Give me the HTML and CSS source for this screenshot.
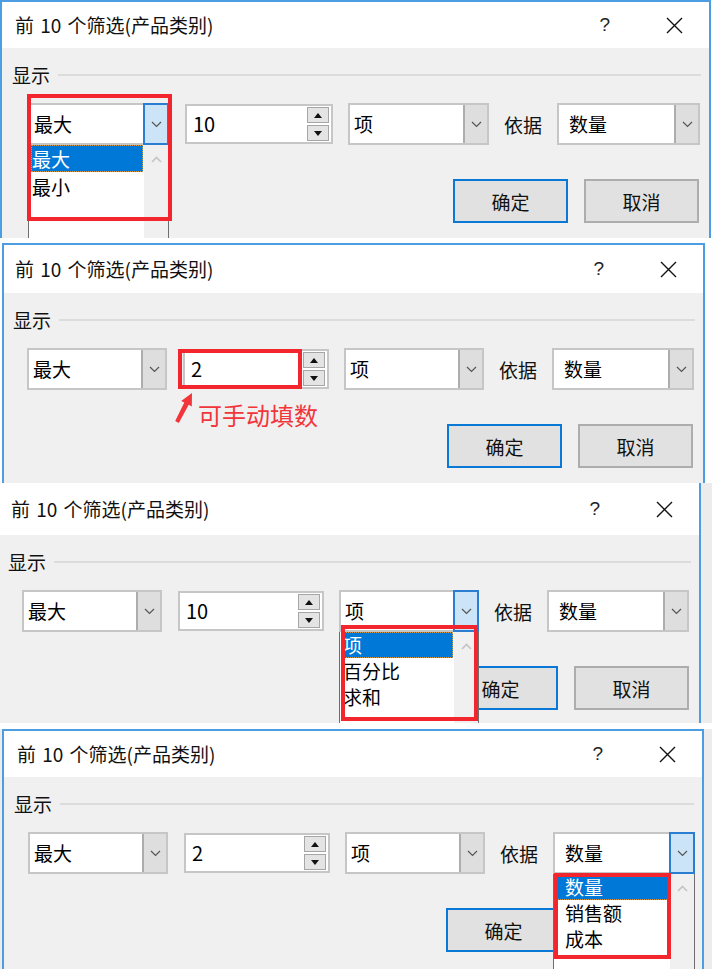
FILE: index.html
```html
<!DOCTYPE html>
<html lang="zh-CN">
<head>
<meta charset="utf-8">
<title>前 10 个筛选</title>
<link rel="stylesheet" href="styles.css">
</head>
<body>

<!-- Shot 1: first combo open -->
<div class="shot s1">
  <div class="dialog d1">
    <div class="titlebar">
      <span class="title">前 10 个筛选(产品类别)</span>
      <span class="help">?</span>
      <span class="close"><svg width="17" height="17" viewBox="0 0 17 17"><path d="M1 1L16 16M16 1L1 16" stroke="#111" stroke-width="1.4" fill="none"/></svg></span>
    </div>
    <div class="body">
      <div class="legend"><span>显示</span><i class="rule"></i></div>
      <div class="controls">
        <div class="combo c1">
          <span class="val">最大</span>
          <span class="btn active"><svg width="11" height="7" viewBox="0 0 11 7"><path d="M1 1l4.5 4.5L10 1" fill="none" stroke="#555" stroke-width="1.2"/></svg></span>
          <div class="list">
            <div class="items"><div class="item sel">最大</div><div class="item">最小</div></div>
            <div class="sb"><svg width="11" height="7" viewBox="0 0 11 7"><path d="M1 6l4.5-4.5L10 6" fill="none" stroke="#c4c4c4" stroke-width="1.6"/></svg></div>
          </div>
          <div class="mark m1"></div>
        </div>
        <div class="spin">
          <span class="val">10</span>
          <span class="arrows">
            <span class="arr"><svg width="8" height="5" viewBox="0 0 8 5"><path d="M0 5L4 0L8 5Z" fill="#111"/></svg></span>
            <span class="arr"><svg width="8" height="5" viewBox="0 0 8 5"><path d="M0 0L4 5L8 0Z" fill="#111"/></svg></span>
          </span>
        </div>
        <div class="combo c2">
          <span class="val">项</span>
          <span class="btn"><svg width="11" height="7" viewBox="0 0 11 7"><path d="M1 1l4.5 4.5L10 1" fill="none" stroke="#555" stroke-width="1.2"/></svg></span>
        </div>
        <span class="label">依据</span>
        <div class="combo c3">
          <span class="val">数量</span>
          <span class="btn"><svg width="11" height="7" viewBox="0 0 11 7"><path d="M1 1l4.5 4.5L10 1" fill="none" stroke="#555" stroke-width="1.2"/></svg></span>
        </div>
      </div>
      <div class="buttons"><span class="button default">确定</span><span class="button">取消</span></div>
    </div>
  </div>
</div>

<!-- Shot 2: number typed manually -->
<div class="shot s2">
  <div class="dialog d2">
    <div class="titlebar">
      <span class="title">前 10 个筛选(产品类别)</span>
      <span class="help">?</span>
      <span class="close"><svg width="17" height="17" viewBox="0 0 17 17"><path d="M1 1L16 16M16 1L1 16" stroke="#111" stroke-width="1.4" fill="none"/></svg></span>
    </div>
    <div class="body">
      <div class="legend"><span>显示</span><i class="rule"></i></div>
      <div class="controls">
        <div class="combo c1">
          <span class="val">最大</span>
          <span class="btn"><svg width="11" height="7" viewBox="0 0 11 7"><path d="M1 1l4.5 4.5L10 1" fill="none" stroke="#555" stroke-width="1.2"/></svg></span>
        </div>
        <div class="spin">
          <span class="val">2</span>
          <span class="arrows">
            <span class="arr"><svg width="8" height="5" viewBox="0 0 8 5"><path d="M0 5L4 0L8 5Z" fill="#111"/></svg></span>
            <span class="arr"><svg width="8" height="5" viewBox="0 0 8 5"><path d="M0 0L4 5L8 0Z" fill="#111"/></svg></span>
          </span>
          <div class="mark m2"></div>
        </div>
        <div class="combo c2">
          <span class="val">项</span>
          <span class="btn"><svg width="11" height="7" viewBox="0 0 11 7"><path d="M1 1l4.5 4.5L10 1" fill="none" stroke="#555" stroke-width="1.2"/></svg></span>
        </div>
        <span class="label">依据</span>
        <div class="combo c3">
          <span class="val">数量</span>
          <span class="btn"><svg width="11" height="7" viewBox="0 0 11 7"><path d="M1 1l4.5 4.5L10 1" fill="none" stroke="#555" stroke-width="1.2"/></svg></span>
        </div>
      </div>
      <div class="buttons"><span class="button default">确定</span><span class="button">取消</span></div>
    </div>
    <svg class="note-arrow" width="24" height="34" viewBox="0 0 24 34"><path d="M19 2L18.8 15.5L15.7 13.85L5.8 31.9L2.2 30.1L11.3 11.55L8.2 9.9Z" fill="#f2353a"/></svg>
    <span class="note">可手动填数</span>
  </div>
</div>

<!-- Shot 3: second combo open -->
<div class="shot s3">
  <div class="dialog d3">
    <div class="titlebar">
      <span class="title">前 10 个筛选(产品类别)</span>
      <span class="help">?</span>
      <span class="close"><svg width="17" height="17" viewBox="0 0 17 17"><path d="M1 1L16 16M16 1L1 16" stroke="#111" stroke-width="1.4" fill="none"/></svg></span>
    </div>
    <div class="body">
      <div class="legend"><span>显示</span><i class="rule"></i></div>
      <div class="controls">
        <div class="combo c1">
          <span class="val">最大</span>
          <span class="btn"><svg width="11" height="7" viewBox="0 0 11 7"><path d="M1 1l4.5 4.5L10 1" fill="none" stroke="#555" stroke-width="1.2"/></svg></span>
        </div>
        <div class="spin">
          <span class="val">10</span>
          <span class="arrows">
            <span class="arr"><svg width="8" height="5" viewBox="0 0 8 5"><path d="M0 5L4 0L8 5Z" fill="#111"/></svg></span>
            <span class="arr"><svg width="8" height="5" viewBox="0 0 8 5"><path d="M0 0L4 5L8 0Z" fill="#111"/></svg></span>
          </span>
        </div>
        <div class="combo c2">
          <span class="val">项</span>
          <span class="btn active"><svg width="11" height="7" viewBox="0 0 11 7"><path d="M1 1l4.5 4.5L10 1" fill="none" stroke="#555" stroke-width="1.2"/></svg></span>
          <div class="list">
            <div class="items"><div class="item sel">项</div><div class="item">百分比</div><div class="item">求和</div></div>
            <div class="sb"><svg width="11" height="7" viewBox="0 0 11 7"><path d="M1 6l4.5-4.5L10 6" fill="none" stroke="#c4c4c4" stroke-width="1.6"/></svg></div>
          </div>
          <div class="mark m3"></div>
        </div>
        <span class="label">依据</span>
        <div class="combo c3">
          <span class="val">数量</span>
          <span class="btn"><svg width="11" height="7" viewBox="0 0 11 7"><path d="M1 1l4.5 4.5L10 1" fill="none" stroke="#555" stroke-width="1.2"/></svg></span>
        </div>
      </div>
      <div class="buttons"><span class="button default">确定</span><span class="button">取消</span></div>
    </div>
  </div>
</div>

<!-- Shot 4: third combo open -->
<div class="shot s4">
  <div class="dialog d4">
    <div class="titlebar">
      <span class="title">前 10 个筛选(产品类别)</span>
      <span class="help">?</span>
      <span class="close"><svg width="17" height="17" viewBox="0 0 17 17"><path d="M1 1L16 16M16 1L1 16" stroke="#111" stroke-width="1.4" fill="none"/></svg></span>
    </div>
    <div class="body">
      <div class="legend"><span>显示</span><i class="rule"></i></div>
      <div class="controls">
        <div class="combo c1">
          <span class="val">最大</span>
          <span class="btn"><svg width="11" height="7" viewBox="0 0 11 7"><path d="M1 1l4.5 4.5L10 1" fill="none" stroke="#555" stroke-width="1.2"/></svg></span>
        </div>
        <div class="spin">
          <span class="val">2</span>
          <span class="arrows">
            <span class="arr"><svg width="8" height="5" viewBox="0 0 8 5"><path d="M0 5L4 0L8 5Z" fill="#111"/></svg></span>
            <span class="arr"><svg width="8" height="5" viewBox="0 0 8 5"><path d="M0 0L4 5L8 0Z" fill="#111"/></svg></span>
          </span>
        </div>
        <div class="combo c2">
          <span class="val">项</span>
          <span class="btn"><svg width="11" height="7" viewBox="0 0 11 7"><path d="M1 1l4.5 4.5L10 1" fill="none" stroke="#555" stroke-width="1.2"/></svg></span>
        </div>
        <span class="label">依据</span>
        <div class="combo c3">
          <span class="val">数量</span>
          <span class="btn active"><svg width="11" height="7" viewBox="0 0 11 7"><path d="M1 1l4.5 4.5L10 1" fill="none" stroke="#555" stroke-width="1.2"/></svg></span>
          <div class="list">
            <div class="items"><div class="item sel">数量</div><div class="item">销售额</div><div class="item">成本</div></div>
            <div class="sb"><svg width="11" height="7" viewBox="0 0 11 7"><path d="M1 6l4.5-4.5L10 6" fill="none" stroke="#c4c4c4" stroke-width="1.6"/></svg></div>
          </div>
          <div class="mark m4"></div>
        </div>
      </div>
      <div class="buttons"><span class="button default">确定</span><span class="button">取消</span></div>
    </div>
  </div>
</div>

</body>
</html>
```

FILE: styles.css
```css
* { box-sizing: border-box; margin: 0; padding: 0; }

html, body {
  width: 712px;
  height: 969px;
  overflow: hidden;
}

body {
  background: #ffffff;
  font-family: "Noto Sans CJK SC", "Microsoft YaHei", sans-serif;
  font-size: 19px;
  color: #000;
}

.shot { width: 712px; display: flex; }
.s1 { height: 238px; margin-bottom: 5px; }
.s2 { height: 240px; }
.s3 { height: 240px; margin-bottom: 6px; background: #ececec; }
.s4 { height: 240px; background: #ececec; }

.dialog {
  position: relative;
  margin-left: var(--x);
  width: var(--w);
  height: 100%;
  background: #f0f0f0;
  border: 2px solid #4d9de2;
  border-bottom: 0;
  overflow: hidden;
}

.d1 { --x: 0px; --w: 711px; --tx: 13px; --th: 46px; --lx: 10px; --cx: 16px;
      --w1: 141px; --w2: 148px; --w3: 141px; --w4: 143px; }
.d2 { --x: 2px; --w: 703px; --tx: 11px; --th: 48px; --lx: 9px; --cx: 14px;
      --w1: 140px; --w2: 146px; --w3: 140px; --w4: 142px; }
.d3 { --x: 0px; --w: 701px; --tx: 11px; --th: 52px; --lx: 8px; --cx: 14px;
      --w1: 140px; --w2: 146px; --w3: 140px; --w4: 142px;
      border-top: 0; border-left: 0; }
.d4 { --x: 2px; --w: 702px; --tx: 13px; --th: 46px; --lx: 10px; --cx: 14px;
      --w1: 140px; --w2: 146px; --w3: 140px; --w4: 142px; }

/* title bar */
.titlebar {
  height: var(--th);
  background: #fff;
  display: flex;
  align-items: center;
  padding-left: var(--tx);
  line-height: 24px;
}
.title { white-space: nowrap; color: #111; word-spacing: 2px; }
.help {
  margin-left: auto;
  font-family: "Liberation Sans", Arial, sans-serif;
  font-size: 19px;
  color: #222;
}
.close {
  margin-left: 56px;
  margin-right: 26px;
  width: 17px;
  height: 17px;
  display: flex;
}

/* body */
.body { padding: 17px 8px 0 var(--lx); }

.legend {
  display: flex;
  align-items: center;
  height: 20px;
  line-height: 20px;
  color: #111;
}
.legend .rule {
  flex: 1;
  height: 2px;
  background: #dcdcdc;
  margin-left: 8px;
}

.controls {
  display: flex;
  align-items: center;
  height: 42px;
  margin-top: 18px;
  margin-left: var(--cx);
}

.combo {
  position: relative;
  display: flex;
  height: 42px;
  border: 2px solid #c6c6c6;
  background: #fff;
  flex: none;
}
.c1 { width: var(--w1); }
.c2 { width: var(--w3); margin-left: 15px; }
.c3 { width: var(--w4); margin-left: 15px; }

.combo .val {
  flex: 1;
  padding-left: 4px;
  line-height: 38px;
  white-space: nowrap;
}
.c3 .val { padding-left: 10px; }

.btn {
  width: 24px;
  background: #dedede;
  border-left: 2px solid #adadad;
  display: flex;
  align-items: center;
  justify-content: center;
}
.btn.active {
  width: 26px;
  margin: -2px -2px -2px 0;
  background: #cce4f7;
  border: 2px solid #2a7dd1;
}

.spin {
  position: relative;
  width: var(--w2);
  margin-left: 16px;
  height: 40px;
  display: flex;
  border: 2px solid #c6c6c6;
  background: #fff;
  flex: none;
}
.spin .val {
  flex: 1;
  padding-left: 6px;
  line-height: 36px;
  font-size: 20px;
}
.arrows {
  width: 25px;
  display: flex;
  flex-direction: column;
  gap: 2px;
  padding: 1px 2px 1px 1px;
}
.arr {
  flex: 1;
  background: #e4e4e4;
  border: 1px solid #a6a6a6;
  display: flex;
  align-items: center;
  justify-content: center;
}

.label {
  margin-left: 15px;
  width: 38px;
  white-space: nowrap;
  color: #111;
  flex: none;
}

/* dropdown lists */
.list {
  position: absolute;
  left: -2px;
  right: -2px;
  top: 40px;
  height: 100px;
  background: #fff;
  border: 1px solid #6e6e6e;
  border-top: 0;
  display: flex;
  z-index: 5;
}
.items { flex: 1; padding: 0 1px 0 2px; }
.item {
  height: 26px;
  line-height: 26px;
  padding-left: 1px;
  white-space: nowrap;
}
.c1 .item.sel { height: 27px; line-height: 27px; }
.c1 .item + .item { margin-top: 2px; }
.c3 .item { padding-left: 8px; }
.c3 .items { padding-left: 3px; }
.item.sel {
  background: #0078d7;
  color: #fff;
  outline: 1px dotted #d39a4e;
  outline-offset: -1px;
}
.sb {
  width: 24px;
  background: #f0f0f0;
  display: flex;
  justify-content: center;
  align-items: flex-start;
  padding-top: 11px;
}

/* red annotation boxes */
.mark {
  position: absolute;
  border: 4px solid #f4262d;
  z-index: 6;
  pointer-events: none;
}
.m1 { left: -3px; top: -11px; width: 145px; height: 127px; }
.m2 { left: -7px; top: -2px; width: 124px; height: 40px; }
.m3 { left: 0px; top: 33px; width: 137px; height: 96px; }
.m4 { left: -1px; top: 39px; width: 117px; height: 86px; }

/* buttons */
.buttons {
  display: flex;
  justify-content: flex-end;
  gap: 16px;
  margin-top: 34px;
  padding-right: 2px;
}
.button {
  width: 115px;
  height: 44px;
  background: #e1e1e1;
  border: 2px solid #adadad;
  display: flex;
  align-items: center;
  justify-content: center;
  color: #111;
}
.button.default { border-color: #0a78d7; }

/* annotation in shot 2 */
.note-arrow {
  position: absolute;
  left: 169px;
  top: 146px;
}
.note {
  position: absolute;
  left: 194px;
  top: 158px;
  font-size: 24px;
  line-height: 24px;
  color: #f2353a;
  white-space: nowrap;
}
```
